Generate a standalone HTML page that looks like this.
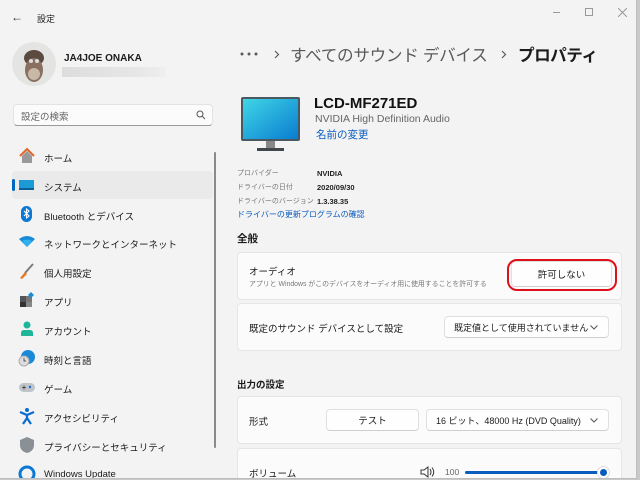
<!DOCTYPE html>
<html><head><meta charset="utf-8"><style>
*{margin:0;padding:0;box-sizing:border-box}
body{width:640px;height:480px;overflow:hidden;background:#c9c9c9;font-family:"Liberation Sans","Noto Sans CJK JP",sans-serif;color:#1b1b1b;position:relative}
.win{position:absolute;left:0;top:0;width:637px;height:479px;background:#f3f3f3;border-right:1px solid #bdbdbd;border-bottom:1px solid #bdbdbd;overflow:hidden}
.a{position:absolute;white-space:nowrap}
.nav{position:absolute;left:44px;font-size:9.5px;color:#1b1b1b}
.ic{position:absolute;left:18px;width:18px;height:18px}
.card{position:absolute;left:237px;width:385px;background:#fbfbfb;border:1px solid #e6e6e6;border-radius:4px}
.btn{position:absolute;background:#fefefe;border:1px solid #e0e0e0;border-bottom-color:#cfcfcf;border-radius:4px;font-size:9.5px;display:flex;align-items:center;justify-content:center}
.dd{justify-content:flex-start;padding-left:9px}
.chev{position:absolute;right:10px;top:8px}
</style></head><body><div class="win">
<div class="a" style="left:11px;top:10px;font-size:12px;color:#333">←</div>
<div class="a" style="left:37px;top:12px;font-size:9px">設定</div>
<div class="a" style="left:553px;top:12px;width:7px;height:1px;background:#999"></div>
<div class="a" style="left:585px;top:8px;width:8px;height:8px;border:1px solid #999"></div>
<svg class="a" style="left:618px;top:8px" width="9" height="9"><path d="M0 0L9 9M9 0L0 9" stroke="#999"/></svg>

<svg class="a" style="left:12px;top:42px" width="44" height="44"><circle cx="22" cy="22" r="22" fill="#e4e4e2"/><ellipse cx="22" cy="16" rx="10" ry="8" fill="#5a4a40"/><ellipse cx="22" cy="28" rx="9" ry="12" fill="#8a7060"/><ellipse cx="22" cy="32" rx="6" ry="6" fill="#c8b8a8"/><circle cx="19" cy="19" r="2" fill="#ddd"/><circle cx="25" cy="19" r="2" fill="#ddd"/></svg>
<div class="a" style="left:64px;top:53px;font-size:10px;font-weight:bold">JA4JOE ONAKA</div>
<div class="a" style="left:62px;top:67px;width:104px;height:10px;background:linear-gradient(90deg,#ddd,#e6e6e6 70%,#efefef)"></div>

<div class="a" style="left:13px;top:104px;width:200px;height:22px;background:#fbfbfb;border:1px solid #e3e3e3;border-bottom:1px solid #9a9a9a;border-radius:4px"></div>
<div class="a" style="left:21px;top:109px;font-size:9.5px;color:#666">設定の検索</div>
<svg class="a" style="left:196px;top:110px" width="10" height="10"><circle cx="4" cy="4" r="3" fill="none" stroke="#555"/><line x1="6.3" y1="6.3" x2="9" y2="9" stroke="#555"/></svg>

<div class="a" style="left:12px;top:171px;width:201px;height:28px;background:#eaeaea;border-radius:4px"></div>
<div class="a" style="left:12px;top:179px;width:3px;height:12px;background:#0067c0;border-radius:2px"></div>
<div class="a" style="left:214px;top:152px;width:2px;height:296px;background:#8a8a8a;border-radius:1px"></div>

<svg class="ic" style="top:147px" viewBox="0 0 18 18"><path d="M2 9L9 2l7 7" fill="none" stroke="#e0662a" stroke-width="2"/><path d="M4 9v7h10V9L9 4z" fill="#999"/></svg>
<div class="nav" style="top:151px">ホーム</div>
<svg class="ic" style="top:176px" viewBox="0 0 18 18"><rect x="1" y="4" width="15" height="10" fill="#1b9ad6"/><rect x="1" y="12" width="15" height="2" fill="#0b5f94"/></svg>
<div class="nav" style="top:180px">システム</div>
<svg class="ic" style="top:205px" viewBox="0 0 18 18"><rect x="3" y="1" width="11" height="16" rx="5.5" fill="#0a78d4"/><path d="M6 6l5 5-2.5 2V4L11 6 6 11" fill="none" stroke="#fff" stroke-width="1.1"/></svg>
<div class="nav" style="top:209px">Bluetooth とデバイス</div>
<svg class="ic" style="top:233px" viewBox="0 0 18 18"><path d="M1 6q8-6 16 0L9 14z" fill="#1a8ad8"/><path d="M4 8q5-3 10 0L9 14z" fill="#2fb1ef"/></svg>
<div class="nav" style="top:237px">ネットワークとインターネット</div>
<svg class="ic" style="top:262px" viewBox="0 0 18 18"><path d="M15 2L7 11" stroke="#7a7a7a" stroke-width="2"/><path d="M7 10l2 2-5 5-2-1z" fill="#e67a20"/></svg>
<div class="nav" style="top:266px">個人用設定</div>
<svg class="ic" style="top:291px" viewBox="0 0 18 18"><rect x="2" y="5" width="6" height="6" fill="#555"/><rect x="2" y="11" width="6" height="5" fill="#333"/><rect x="8" y="11" width="6" height="5" fill="#888"/><rect x="8" y="5" width="6" height="6" fill="#777"/><path d="M13 1l3 3-3 3-3-3z" fill="#1a8ad8"/></svg>
<div class="nav" style="top:295px">アプリ</div>
<svg class="ic" style="top:320px" viewBox="0 0 18 18"><circle cx="9" cy="5" r="3.5" fill="#1fb59a"/><path d="M3 16v-3q0-3 3-3h6q3 0 3 3v3z" fill="#1fb59a"/></svg>
<div class="nav" style="top:324px">アカウント</div>
<svg class="ic" style="top:349px" viewBox="0 0 18 18"><circle cx="10" cy="8" r="7" fill="#1a8ad8"/><circle cx="6" cy="12" r="5" fill="#ddd" stroke="#aaa"/><path d="M6 9v3h2" stroke="#555" fill="none"/></svg>
<div class="nav" style="top:353px">時刻と言語</div>
<svg class="ic" style="top:378px" viewBox="0 0 18 18"><rect x="1" y="5" width="16" height="9" rx="4.5" fill="#bfc4c8"/><circle cx="12" cy="9" r="1.2" fill="#1a6ad8"/><path d="M4 9.5h4M6 7.5v4" stroke="#555"/></svg>
<div class="nav" style="top:382px">ゲーム</div>
<svg class="ic" style="top:407px" viewBox="0 0 18 18"><circle cx="9" cy="3" r="2" fill="#0a6cd0"/><path d="M2 5l7 3 7-3M9 8v3l-4 6M9 11l4 6" stroke="#0a6cd0" stroke-width="2.2" fill="none"/></svg>
<div class="nav" style="top:411px">アクセシビリティ</div>
<svg class="ic" style="top:436px" viewBox="0 0 18 18"><path d="M9 1l7 3v5q0 6-7 8-7-2-7-8V4z" fill="#8a9096"/></svg>
<div class="nav" style="top:440px">プライバシーとセキュリティ</div>
<svg class="ic" style="top:465px" viewBox="0 0 18 18"><circle cx="9" cy="9" r="7" fill="none" stroke="#0a78d4" stroke-width="3"/></svg>
<div class="nav" style="top:469px">Windows Update</div>

<svg class="a" style="left:240px;top:52px" width="20" height="4"><circle cx="2" cy="2" r="1.5" fill="#5a5a5a"/><circle cx="9" cy="2" r="1.5" fill="#5a5a5a"/><circle cx="16" cy="2" r="1.5" fill="#5a5a5a"/></svg>
<svg class="a" style="left:274px;top:50px" width="6" height="9"><path d="M1 1l3.5 3.5L1 8" fill="none" stroke="#5a5a5a" stroke-width="1.2"/></svg>
<div class="a" style="left:290px;top:42px;font-size:16.6px;letter-spacing:-0.3px;color:#5a5a5a">すべてのサウンド デバイス</div>
<svg class="a" style="left:501px;top:50px" width="6" height="9"><path d="M1 1l3.5 3.5L1 8" fill="none" stroke="#5a5a5a" stroke-width="1.2"/></svg>
<div class="a" style="left:518px;top:42px;font-size:16.6px;letter-spacing:-0.5px;font-weight:bold">プロパティ</div>

<svg class="a" style="left:240px;top:96px" width="62" height="58"><rect x="1" y="1" width="59" height="44" rx="2" fill="#4a5860"/><defs><linearGradient id="g" x1="0" y1="0" x2="1" y2="1"><stop offset="0" stop-color="#3fd6e6"/><stop offset="1" stop-color="#0a7cd0"/></linearGradient></defs><rect x="3" y="3" width="55" height="40" fill="url(#g)"/><rect x="26" y="45" width="9" height="7" fill="#888"/><rect x="17" y="52" width="27" height="3" fill="#40484e"/></svg>
<div class="a" style="left:314px;top:95px;font-size:15px;font-weight:bold;color:#111">LCD-MF271ED</div>
<div class="a" style="left:315px;top:113px;font-size:10.5px;color:#666">NVIDIA High Definition Audio</div>
<div class="a" style="left:316px;top:127px;font-size:10.5px;color:#0a5cbf">名前の変更</div>

<div class="a" style="left:237px;top:167px;font-size:7px;color:#777;line-height:14px">プロバイダー<br>ドライバーの日付<br>ドライバーのバージョン</div>
<div class="a" style="left:317px;top:167px;font-size:7.5px;color:#222;line-height:14px;font-weight:bold">NVIDIA<br>2020/09/30<br>1.3.38.35</div>
<div class="a" style="left:237px;top:209px;font-size:8px;color:#0a5cbf">ドライバーの更新プログラムの確認</div>

<div class="a" style="left:237px;top:231px;font-size:10.5px;font-weight:bold">全般</div>
<div class="card" style="top:252px;height:48px"></div>
<div class="a" style="left:249px;top:264px;font-size:9.5px">オーディオ</div>
<div class="a" style="left:249px;top:278px;font-size:6.9px;color:#777">アプリと Windows がこのデバイスをオーディオ用に使用することを許可する</div>
<div class="btn" style="left:511px;top:261px;width:101px;height:26px">許可しない</div>
<div class="a" style="left:507px;top:259px;width:110px;height:32px;border:2.5px solid #e0101a;border-radius:10px"></div>

<div class="card" style="top:303px;height:48px"></div>
<div class="a" style="left:249px;top:321px;font-size:9.5px">既定のサウンド デバイスとして設定</div>
<div class="btn dd" style="left:444px;top:316px;width:165px;height:22px;font-size:9px">既定値として使用されていません<svg class="chev" width="8" height="5"><path d="M0.5 0.5L4 4 7.5 0.5" fill="none" stroke="#555"/></svg></div>

<div class="a" style="left:237px;top:377px;font-size:9.5px;font-weight:bold">出力の設定</div>
<div class="card" style="top:396px;height:48px"></div>
<div class="a" style="left:249px;top:414px;font-size:9.5px">形式</div>
<div class="btn" style="left:326px;top:409px;width:93px;height:22px">テスト</div>
<div class="btn dd" style="left:426px;top:409px;width:183px;height:22px;font-size:9px">16 ビット、48000 Hz (DVD Quality)<svg class="chev" width="8" height="5"><path d="M0.5 0.5L4 4 7.5 0.5" fill="none" stroke="#555"/></svg></div>

<div class="card" style="top:448px;height:40px"></div>
<div class="a" style="left:249px;top:466px;font-size:9.5px">ボリューム</div>
<svg class="a" style="left:420px;top:466px" width="16" height="12"><path d="M1 4h3l4-3v10l-4-3H1z" fill="none" stroke="#333"/><path d="M10 3q2 3 0 6M12 1.5q3.5 4.5 0 9" fill="none" stroke="#333"/></svg>
<div class="a" style="left:445px;top:467px;font-size:8.5px;color:#666">100</div>
<div class="a" style="left:465px;top:471px;width:135px;height:3px;background:#0a5cbf;border-radius:2px"></div>
<div class="a" style="left:597px;top:466px;width:13px;height:13px;border-radius:50%;background:#fff;border:1px solid #ddd"></div>
<div class="a" style="left:600px;top:469px;width:7px;height:7px;border-radius:50%;background:#0a5cbf"></div>
</div></body></html>
